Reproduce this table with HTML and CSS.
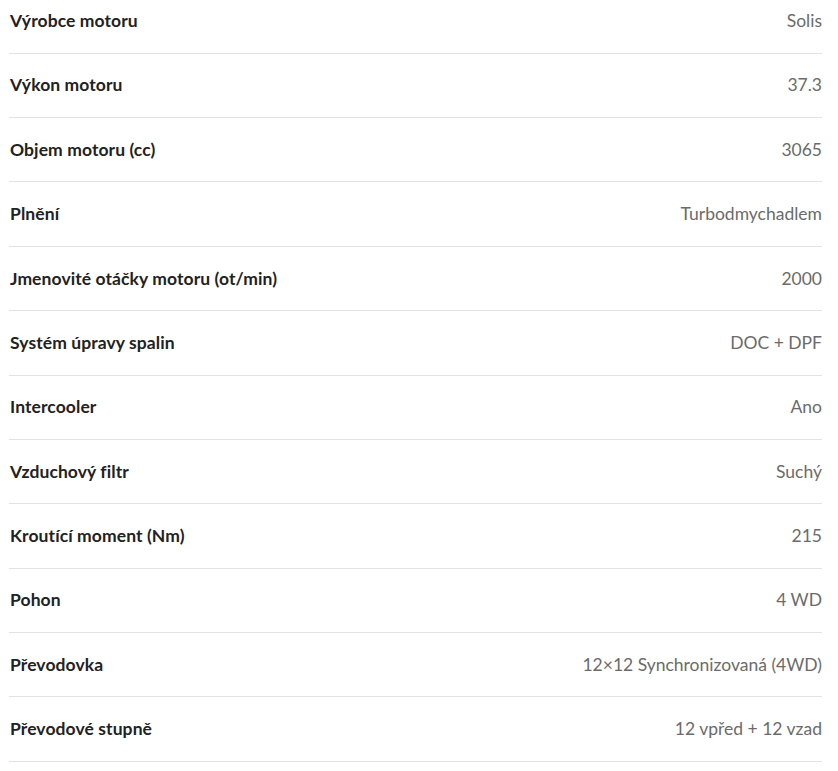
FILE: index.html
```html
<!DOCTYPE html>
<html lang="cs">
<head>
<meta charset="utf-8">
<link rel="stylesheet" href="styles.css">
</head>
<body>
<div class="specs">
  <div class="row"><span class="label">Výrobce motoru</span><span class="value">Solis</span></div>
  <div class="row"><span class="label">Výkon motoru</span><span class="value">37.3</span></div>
  <div class="row"><span class="label">Objem motoru (cc)</span><span class="value">3065</span></div>
  <div class="row"><span class="label">Plnění</span><span class="value">Turbodmychadlem</span></div>
  <div class="row"><span class="label">Jmenovité otáčky motoru (ot/min)</span><span class="value">2000</span></div>
  <div class="row"><span class="label">Systém úpravy spalin</span><span class="value">DOC + DPF</span></div>
  <div class="row"><span class="label">Intercooler</span><span class="value">Ano</span></div>
  <div class="row"><span class="label">Vzduchový filtr</span><span class="value">Suchý</span></div>
  <div class="row"><span class="label">Kroutící moment (Nm)</span><span class="value">215</span></div>
  <div class="row"><span class="label">Pohon</span><span class="value">4 WD</span></div>
  <div class="row"><span class="label">Převodovka</span><span class="value">12×12 Synchronizovaná (4WD)</span></div>
  <div class="row"><span class="label">Převodové stupně</span><span class="value">12 vpřed + 12 vzad</span></div>
</div>
</body>
</html>
```
FILE: styles.css
```css
html, body {
  margin: 0;
  padding: 0;
  background: #fff;
}
body {
  font-family: Lato, "Noto Sans", sans-serif;
  font-size: 17.5px;
}
.specs {
  margin: -10.6px 0 0 9px;
  width: 813px;
  display: flex;
  flex-direction: column;
}
.row {
  display: flex;
  justify-content: space-between;
  align-items: center;
  height: 63.36px;
  border-bottom: 1px solid #e3e3e3;
  line-height: 24px;
}
.label {
  font-weight: 700;
  color: #222;
  padding-left: 1px;
  letter-spacing: 0.09px;
}
.value {
  color: #6b6b6b;
  text-align: right;
}
```
